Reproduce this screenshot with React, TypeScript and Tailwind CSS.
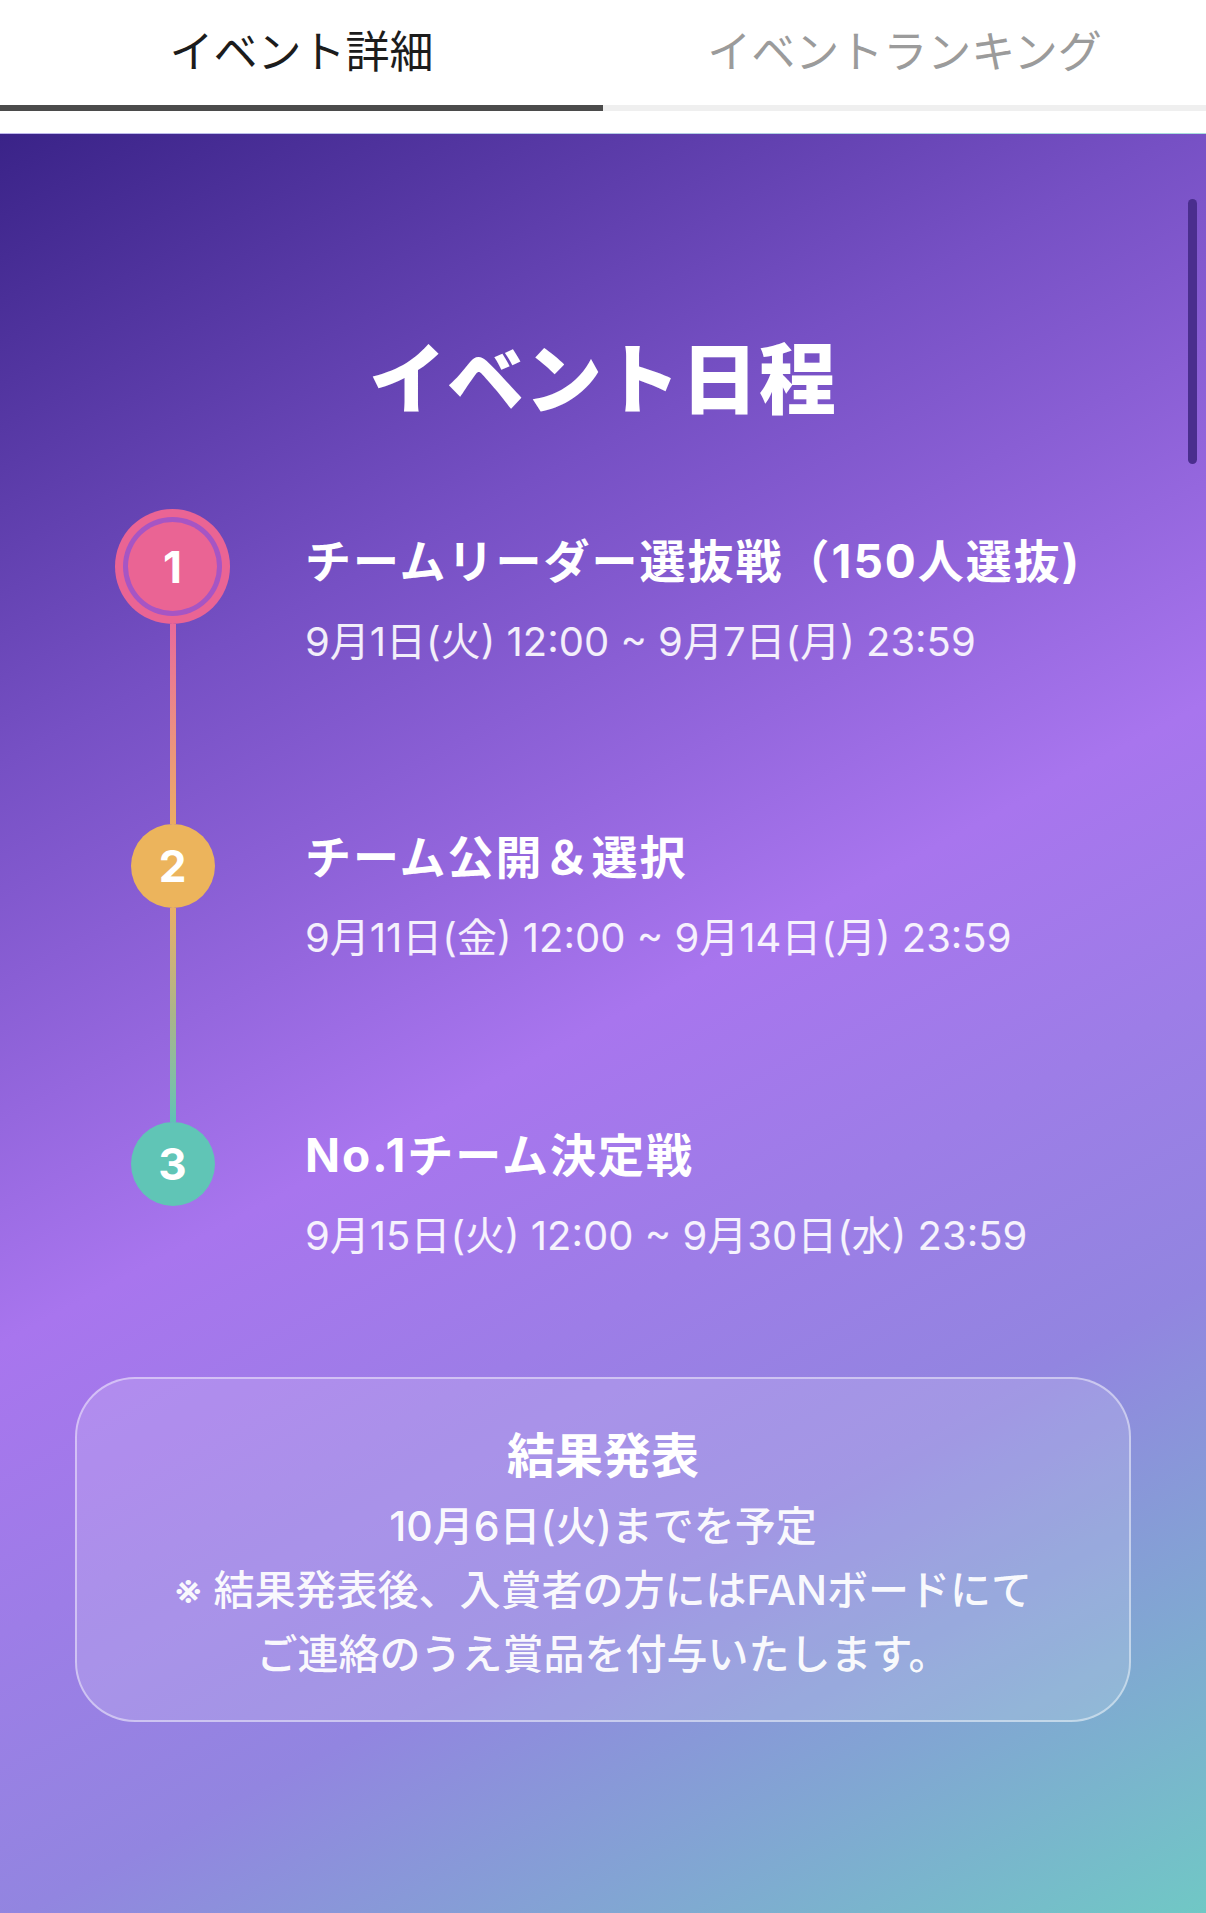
import React from "react";

const jp = "font-['Noto_Sans_CJK_JP',sans-serif]";
const mixed = "font-['Inter','Noto_Sans_CJK_JP',sans-serif]";

interface Step {
  no: number;
  title: string;
  period: string;
}

const steps: Step[] = [
  { no: 1, title: "チームリーダー選抜戦（150人選抜)", period: "9月1日(火) 12:00 ~ 9月7日(月) 23:59" },
  { no: 2, title: "チーム公開＆選択", period: "9月11日(金) 12:00 ~ 9月14日(月) 23:59" },
  { no: 3, title: "No.1チーム決定戦", period: "9月15日(火) 12:00 ~ 9月30日(水) 23:59" },
];

function StepText({ step, top }: { step: Step; top: string }) {
  return (
    <div className={`ml-[75px] ${top}`}>
      <p className={`${mixed} text-[46px] font-bold leading-[56px] text-white tracking-[2px]`}>{step.title}</p>
      <p className={`${mixed} mt-[28px] text-[40px] leading-[50px] text-white/90`}>{step.period}</p>
    </div>
  );
}

export default function App() {
  return (
    <div className="w-[1206px] min-h-[1913px] bg-white">
      {/* Tabs */}
      <div className="flex h-[105px]">
        <div className={`${jp} flex flex-1 items-center justify-center pb-[8px] text-[44px] text-[#1c1c1c]`}>イベント詳細</div>
        <div className={`${jp} flex flex-1 items-center justify-center pb-[8px] text-[44px] text-[#9b9b9b]`}>イベントランキング</div>
      </div>
      <div className="flex h-[6px]">
        <div className="flex-1 bg-[#4b4b4b]" />
        <div className="flex-1 bg-[#efefef]" />
      </div>
      <div className="h-[22px]" />

      {/* Schedule */}
      <main className="relative min-h-[1780px] border-t border-white/40 bg-[linear-gradient(152deg,#3a2388_0%,#7650c4_26%,#a875ee_50%,#9285e0_74%,#70c8c5_100%)] pb-[120px]">
        <div className="absolute right-[9px] top-[65px] h-[265px] w-[9px] rounded-full bg-[#4a2e8e]" />

        <h1 className={`${jp} pt-[202px] text-center text-[77px] font-black leading-none text-white tracking-[1px]`}>
          イベント日程
        </h1>

        <div className="mt-[96px] pl-[115px]">
          {/* 1 */}
          <div className="flex items-start">
            <div className="flex w-[115px] flex-col items-center">
              <div className="h-[115px] w-[115px] rounded-full bg-[#ea6494] p-[8px]">
                <div className="h-full w-full rounded-full bg-[#a655c4] p-[5px]">
                  <div className="flex h-full w-full items-center justify-center rounded-full bg-[#ea6494] font-['Inter',sans-serif] text-[44px] font-bold text-white">
                    1
                  </div>
                </div>
              </div>
              <div className="h-[200px] w-[6px] bg-gradient-to-b from-[#e96a9a] to-[#ebac62]" />
            </div>
            <StepText step={steps[0]} top="pt-[24px]" />
          </div>

          {/* 2 */}
          <div className="flex items-start">
            <div className="flex w-[115px] flex-col items-center">
              <div className="flex h-[84px] w-[84px] items-center justify-center rounded-full bg-[#ecb45c] font-['Inter',sans-serif] text-[44px] font-bold text-white">
                2
              </div>
              <div className="h-[214px] w-[6px] bg-gradient-to-b from-[#e9ae66] via-[#a9b48a] to-[#5ec3b4]" />
            </div>
            <StepText step={steps[1]} top="pt-[5px]" />
          </div>

          {/* 3 */}
          <div className="flex items-start">
            <div className="flex w-[115px] flex-col items-center">
              <div className="flex h-[84px] w-[84px] items-center justify-center rounded-full bg-[#60c5b6] font-['Inter',sans-serif] text-[44px] font-bold text-white">
                3
              </div>
            </div>
            <StepText step={steps[2]} top="pt-[5px]" />
          </div>
        </div>

        {/* Result */}
        <div className="mx-[75px] mt-[116px] rounded-[60px] border-2 border-white/45 bg-white/15 pb-[34px] pt-[44px] text-center text-white">
          <p className={`${jp} text-[48px] font-bold leading-[58px]`}>結果発表</p>
          <div className={`${mixed} mt-[13px] text-[41px] font-medium leading-[64px] text-white/95`}>
            <p>10月6日(火)までを予定</p>
            <p>※ 結果発表後、入賞者の方にはFANボードにて</p>
            <p>ご連絡のうえ賞品を付与いたします。</p>
          </div>
        </div>
      </main>
    </div>
  );
}
